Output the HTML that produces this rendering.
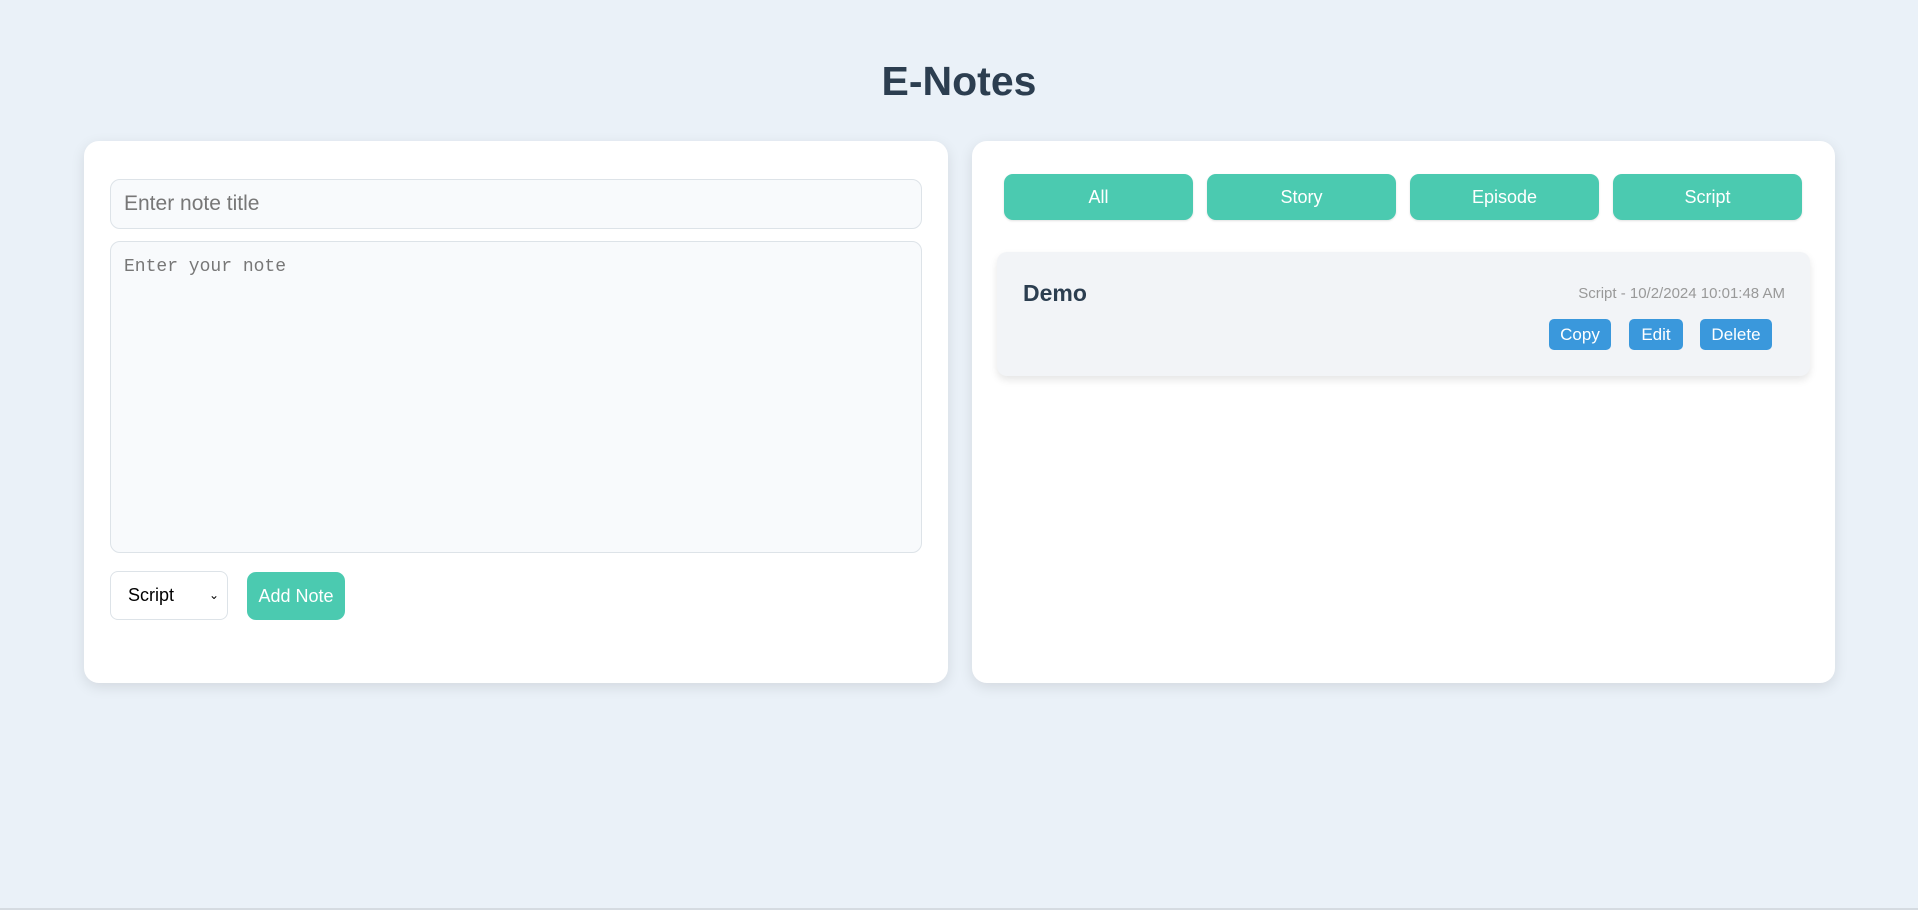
<!DOCTYPE html>
<html><head><style>
*{box-sizing:border-box;margin:0;padding:0}
body{width:1918px;height:910px;background:#eaf1f8;font-family:"Liberation Sans",sans-serif;position:relative;overflow:hidden;border-bottom:2px solid #d5dbe1}
h1{position:absolute;top:58px;left:0;width:100%;text-align:center;font-size:41px;color:#2c3e50;font-weight:bold;font-family:"Liberation Sans",sans-serif}
.panel{position:absolute;top:141px;height:542px;background:#fff;border-radius:15px;box-shadow:0 4px 14px rgba(0,0,0,.1)}
.abs{position:absolute}
.inp{background:#f8fafc;border:1px solid #dde3e8;border-radius:10px;color:#777}
.fb{position:absolute;top:174px;width:189px;height:46px;background:#4bcab0;border-radius:9px;color:#fff;font-size:18px;text-align:center;line-height:46px;box-shadow:0 1px 2px rgba(0,0,0,.12)}
.bb{position:absolute;top:319px;height:31px;background:#3a98dc;border-radius:5px;color:#fff;font-size:17px;text-align:center;line-height:31px}
</style></head><body>
<h1>E-Notes</h1>
<div class="panel" style="left:84px;width:864px"></div>
<div class="panel" style="left:972px;width:863px"></div>
<div class="abs inp" style="left:110px;top:179px;width:812px;height:50px;font-size:21px;line-height:48px;padding-left:13px">Enter note title</div>
<div class="abs inp" style="left:110px;top:241px;width:812px;height:312px;font-family:'Liberation Mono',monospace;font-size:18px;padding:15px 13px">Enter your note</div>
<div class="abs" style="left:110px;top:571px;width:118px;height:49px;border:1px solid #dde3e8;border-radius:8px;background:#fff;font-size:18px;line-height:47px;padding-left:17px;color:#000">Script<span style="position:absolute;right:8px;font-size:12px">&#8964;</span></div>
<div class="abs" style="left:247px;top:572px;width:98px;height:48px;background:#4bcab0;border-radius:9px;color:#fff;font-size:18px;line-height:48px;text-align:center">Add Note</div>
<div class="fb" style="left:1004px">All</div>
<div class="fb" style="left:1207px">Story</div>
<div class="fb" style="left:1410px">Episode</div>
<div class="fb" style="left:1613px">Script</div>
<div class="abs" style="left:997px;top:252px;width:813px;height:124px;background:#f2f4f7;border-radius:10px;box-shadow:0 4px 8px rgba(0,0,0,.1)"></div>
<div class="abs" style="left:1023px;top:280px;font-size:23px;font-weight:bold;color:#2c3e50">Demo</div>
<div class="abs" style="right:133px;top:285px;font-size:15px;color:#999">Script - 10/2/2024 10:01:48 AM</div>
<div class="bb" style="left:1549px;width:62px">Copy</div>
<div class="bb" style="left:1629px;width:54px">Edit</div>
<div class="bb" style="left:1700px;width:72px">Delete</div>
</body></html>
